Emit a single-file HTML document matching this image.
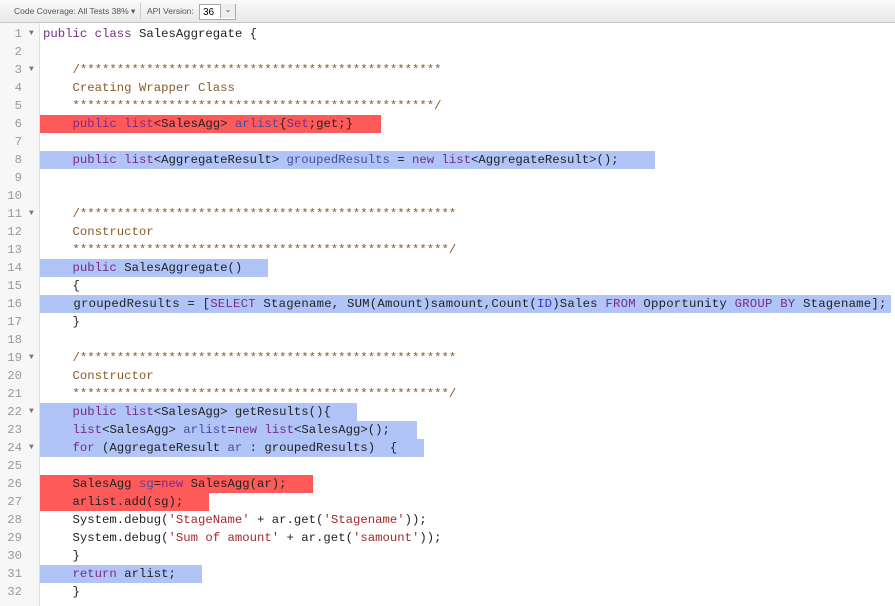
<!DOCTYPE html>
<html><head><style>
body{margin:0;width:895px;height:606px;overflow:hidden;background:#fff;font-family:"Liberation Sans",sans-serif;position:relative}
.tb{position:absolute;left:0;top:0;width:895px;height:22px;background:linear-gradient(#fafafa,#e8e8e8);border-bottom:1px solid #c8c8c8;font-size:8.5px;color:#555}
.tb span{position:absolute;top:6px}
.sel{position:absolute;left:199px;top:4px;width:35px;height:14px;border:1px solid #aaa;background:#fff}
.gut{position:absolute;left:0;top:23px;width:39px;height:583px;background:#f7f7f7;border-right:1px solid #e0e0e0}
.r{position:absolute;left:0;height:18px;width:895px;font-family:"Liberation Mono",monospace;font-size:12.3px;line-height:18px;white-space:pre;color:#222}
.n{position:absolute;left:0;width:22px;text-align:right;color:#999}
.a{position:absolute;left:29px;color:#777;font-size:8px}
.c{position:absolute;left:43px}
.h{position:absolute;left:40px;height:18px}
.R{background:#ff5a5a}.B{background:#b0c4f8}
.k{color:#7a2a8a}.m{color:#8a5a2a}.s{color:#a32828}.v{color:#4a4aa0}.i{color:#2a3ad0}
</style></head><body>
<div class="tb"><span style="left:14px">Code Coverage: All Tests 38% &#9662;</span><span style="left:140px;top:3px;height:16px;border-left:1px solid #ccc"></span><span style="left:147px">API Version:</span><div class="sel"><span style="left:3px;top:2px;font-size:10px;color:#000">36</span><span style="left:20px;top:-1px;width:14px;height:14px;border-left:1px solid #aaa;background:#eee;text-align:center;color:#555">&#8964;</span></div></div>
<div class="gut"></div>
<div class="h R" style="top:115px;width:341px"></div>
<div class="h B" style="top:151px;width:615px"></div>
<div class="h B" style="top:259px;width:228px"></div>
<div class="h B" style="top:295px;width:851px"></div>
<div class="h B" style="top:403px;width:317px"></div>
<div class="h B" style="top:421px;width:377px"></div>
<div class="h B" style="top:439px;width:384px"></div>
<div class="h R" style="top:475px;width:273px"></div>
<div class="h R" style="top:493px;width:169px"></div>
<div class="h B" style="top:565px;width:162px"></div>
<div class="r" style="top:25px"><span class="n">1</span><span class="a">&#9660;</span><span class="c"><span class="k">public class</span> SalesAggregate {</span></div>
<div class="r" style="top:43px"><span class="n">2</span></div>
<div class="r" style="top:61px"><span class="n">3</span><span class="a">&#9660;</span><span class="c m">    /*************************************************</span></div>
<div class="r" style="top:79px"><span class="n">4</span><span class="c m">    Creating Wrapper Class</span></div>
<div class="r" style="top:97px"><span class="n">5</span><span class="c m">    *************************************************/</span></div>
<div class="r" style="top:115px"><span class="n">6</span><span class="c">    <span class="k">public list</span>&lt;SalesAgg&gt; <span class="v">arlist</span>{<span class="k">Set</span>;get;}</span></div>
<div class="r" style="top:133px"><span class="n">7</span></div>
<div class="r" style="top:151px"><span class="n">8</span><span class="c">    <span class="k">public list</span>&lt;AggregateResult&gt; <span class="v">groupedResults</span> = <span class="k">new list</span>&lt;AggregateResult&gt;();</span></div>
<div class="r" style="top:169px"><span class="n">9</span></div>
<div class="r" style="top:187px"><span class="n">10</span></div>
<div class="r" style="top:205px"><span class="n">11</span><span class="a">&#9660;</span><span class="c m">    /***************************************************</span></div>
<div class="r" style="top:223px"><span class="n">12</span><span class="c m">    Constructor</span></div>
<div class="r" style="top:241px"><span class="n">13</span><span class="c m">    ***************************************************/</span></div>
<div class="r" style="top:259px"><span class="n">14</span><span class="c">    <span class="k">public</span> SalesAggregate()</span></div>
<div class="r" style="top:277px"><span class="n">15</span><span class="c">    {</span></div>
<div class="r" style="top:295px"><span class="n">16</span><span class="c" style="letter-spacing:0.22px">    groupedResults = [<span class="k">SELECT</span> Stagename, SUM(Amount)samount,Count(<span class="i">ID</span>)Sales <span class="k">FROM</span> Opportunity <span class="k">GROUP BY</span> Stagename];</span></div>
<div class="r" style="top:313px"><span class="n">17</span><span class="c">    }</span></div>
<div class="r" style="top:331px"><span class="n">18</span></div>
<div class="r" style="top:349px"><span class="n">19</span><span class="a">&#9660;</span><span class="c m">    /***************************************************</span></div>
<div class="r" style="top:367px"><span class="n">20</span><span class="c m">    Constructor</span></div>
<div class="r" style="top:385px"><span class="n">21</span><span class="c m">    ***************************************************/</span></div>
<div class="r" style="top:403px"><span class="n">22</span><span class="a">&#9660;</span><span class="c">    <span class="k">public list</span>&lt;SalesAgg&gt; getResults(){</span></div>
<div class="r" style="top:421px"><span class="n">23</span><span class="c">    <span class="k">list</span>&lt;SalesAgg&gt; <span class="v">arlist</span>=<span class="k">new list</span>&lt;SalesAgg&gt;();</span></div>
<div class="r" style="top:439px"><span class="n">24</span><span class="a">&#9660;</span><span class="c">    <span class="k">for</span> (AggregateResult <span class="v">ar</span> : groupedResults)  {</span></div>
<div class="r" style="top:457px"><span class="n">25</span></div>
<div class="r" style="top:475px"><span class="n">26</span><span class="c">    SalesAgg <span class="v">sg</span>=<span class="k">new</span> SalesAgg(ar);</span></div>
<div class="r" style="top:493px"><span class="n">27</span><span class="c">    arlist.add(sg);</span></div>
<div class="r" style="top:511px"><span class="n">28</span><span class="c">    System.debug(<span class="s">'StageName'</span> + ar.get(<span class="s">'Stagename'</span>));</span></div>
<div class="r" style="top:529px"><span class="n">29</span><span class="c">    System.debug(<span class="s">'Sum of amount'</span> + ar.get(<span class="s">'samount'</span>));</span></div>
<div class="r" style="top:547px"><span class="n">30</span><span class="c">    }</span></div>
<div class="r" style="top:565px"><span class="n">31</span><span class="c">    <span class="k">return</span> arlist;</span></div>
<div class="r" style="top:583px"><span class="n">32</span><span class="c">    }</span></div>
</body></html>
